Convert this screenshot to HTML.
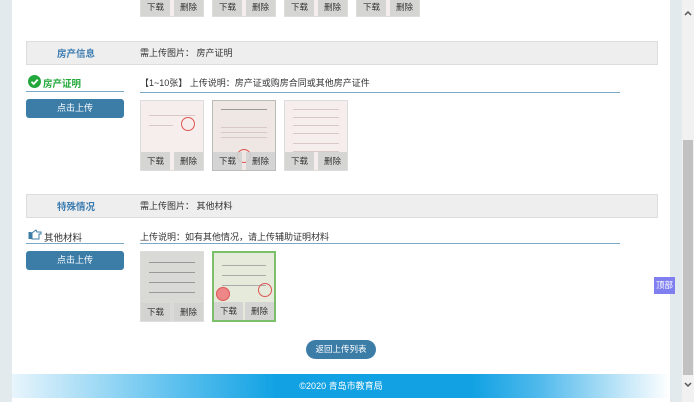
<!DOCTYPE html>
<html><head><meta charset="utf-8">
<style>
*{margin:0;padding:0;box-sizing:border-box}
body{width:694px;height:402px;overflow:hidden;position:relative;background:#fff;font-family:"Liberation Sans","Noto Sans CJK SC",sans-serif;font-size:9px;color:#333}
.abs{position:absolute}
.lstrip{left:0;top:0;width:12px;height:402px;background:#e3eaee}
.rstrip{left:670px;top:0;width:12px;height:402px;background:#e3eaee}
.sb{left:682px;top:0;width:12px;height:402px;background:#f1f1f1}
.thumbsb{left:683px;top:140px;width:10px;height:235px;background:#c1c1c1}
.hdr{left:26px;width:632px;height:24px;background:#eee;border:1px solid #ddd}
.hdr .l{position:absolute;left:0;width:98px;text-align:center;top:4px;color:#3a7bb0;font-weight:bold;font-size:9.5px}
.hdr .r{position:absolute;left:113px;top:4px}
.ul{left:26px;width:98px;height:1px;background:#7aa9c8}
.ur{left:140px;width:480px;height:1px;background:#7aa9c8}
.btn{left:26px;width:98px;height:19px;background:#3c7da8;border-radius:3px;color:#fff;text-align:center;line-height:19px;font-size:9px}
.th{width:64px;height:71px;border:1px solid #ddd;background:#f6eeec;overflow:hidden}
.th .bar{position:absolute;left:0;right:0;bottom:0;height:18px}
.th .bar span{position:absolute;top:0;height:18px;width:29px;background:rgba(210,210,210,.9);text-align:center;line-height:18px;font-size:8.5px;color:#333}
.ln{position:absolute;left:8px;right:8px;height:1px;background:#d9c8c4}
.seal{position:absolute;width:14px;height:14px;border:1px solid #d55;border-radius:50%}
</style></head><body>
<div class="abs lstrip"></div><div class="abs rstrip"></div>
<div class="abs sb"></div><div class="abs thumbsb"></div>
<svg class="abs" style="left:682px;top:8px" width="12" height="10"><path d="M3 7 L6 4 L9 7" stroke="#555" stroke-width="1.5" fill="none"/></svg>
<svg class="abs" style="left:682px;top:380px" width="12" height="10"><path d="M3 3 L6 6 L9 3" stroke="#555" stroke-width="1.5" fill="none"/></svg>

<div class="abs th" style="left:140px;top:-54px"><div class="bar"><span style="left:0">下载</span><span style="right:0">删除</span></div></div>
<div class="abs th" style="left:212px;top:-54px"><div class="bar"><span style="left:0">下载</span><span style="right:0">删除</span></div></div>
<div class="abs th" style="left:284px;top:-54px"><div class="bar"><span style="left:0">下载</span><span style="right:0">删除</span></div></div>
<div class="abs th" style="left:356px;top:-54px"><div class="bar"><span style="left:0">下载</span><span style="right:0">删除</span></div></div>

<div class="abs hdr" style="top:41px"><div class="l">房产信息</div><div class="r">需上传图片： 房产证明</div></div>
<svg class="abs" style="left:28px;top:75px" width="13" height="13"><circle cx="6.5" cy="6.5" r="6.5" fill="#22a83a"/><path d="M3.5 6.8 L5.7 9 L9.7 4.6" stroke="#fff" stroke-width="1.8" fill="none"/></svg>
<div class="abs" style="left:43px;top:76px;color:#22a83a;font-weight:bold;font-size:9.5px">房产证明</div>
<div class="abs ul" style="top:91px"></div>
<div class="abs" style="left:140px;top:76px">【1~10张】 上传说明：房产证或购房合同或其他房产证件</div>
<div class="abs ur" style="top:92px"></div>
<div class="abs btn" style="top:99px">点击上传</div>
<div class="abs th" style="left:140px;top:100px"><div class="ln" style="top:14px"></div><div class="ln" style="top:24px;right:30px"></div><div class="seal" style="left:40px;top:16px"></div><div class="bar"><span style="left:0">下载</span><span style="right:0">删除</span></div></div>
<div class="abs th" style="left:212px;top:100px;background:#efe7e3;border-color:#bbb"><div class="ln" style="top:8px;background:#999"></div><div class="ln" style="top:26px"></div><div class="ln" style="top:31px"></div><div class="ln" style="top:36px"></div><div class="seal" style="left:24px;top:48px"></div><div class="bar"><span style="left:0">下载</span><span style="right:0">删除</span></div></div>
<div class="abs th" style="left:284px;top:100px"><div class="ln" style="top:8px"></div><div class="ln" style="top:16px"></div><div class="ln" style="top:24px"></div><div class="ln" style="top:32px"></div><div class="ln" style="top:42px"></div><div class="ln" style="top:50px"></div><div class="bar"><span style="left:0">下载</span><span style="right:0">删除</span></div></div>

<div class="abs hdr" style="top:194px"><div class="l">特殊情况</div><div class="r">需上传图片： 其他材料</div></div>
<svg class="abs" style="left:28px;top:229px" width="14" height="11"><rect x="0.5" y="3" width="3" height="7" fill="#3c7da8"/><path d="M4 4 L8 1 L9 3 L13 3 L13 5 L11 5 L11 10 L4 10 Z" fill="#fff" stroke="#3c7da8"/></svg>
<div class="abs" style="left:44px;top:230px;font-size:9.5px">其他材料</div>
<div class="abs ul" style="top:243px"></div>
<div class="abs" style="left:140px;top:230px">上传说明：如有其他情况，请上传辅助证明材料</div>
<div class="abs ur" style="top:243px"></div>
<div class="abs btn" style="top:251px">点击上传</div>
<div class="abs th" style="left:140px;top:251px;background:#d9d9d6"><div class="ln" style="top:10px;background:#999"></div><div class="ln" style="top:20px;background:#999"></div><div class="ln" style="top:30px;background:#999"></div><div class="ln" style="top:40px;background:#999"></div><div class="bar"><span style="left:0">下载</span><span style="right:0">删除</span></div></div>
<div class="abs th" style="left:212px;top:251px;background:#e6eadb;border:2px solid #7cbf6a"><div class="ln" style="top:12px;background:#aaa"></div><div class="ln" style="top:22px;background:#aaa"></div><div class="ln" style="top:32px;background:#aaa"></div><div class="seal" style="left:2px;top:34px;background:#e88"></div><div class="seal" style="left:44px;top:30px"></div><div class="bar"><span style="left:0">下载</span><span style="right:0">删除</span></div></div>

<div class="abs" style="left:306px;top:340px;width:70px;height:19px;border-radius:10px;background:#3c7da8;color:#fff;text-align:center;line-height:19px;font-size:8.5px">返回上传列表</div>
<div class="abs" style="left:654px;top:277px;width:21px;height:17px;background:#7f7ff0;color:#fff;text-align:center;line-height:17px;font-size:8.5px">顶部</div>

<div class="abs" style="left:12px;top:374px;width:658px;height:24px;background:linear-gradient(90deg,#e8f5fc 0%,#5cc0ee 25%,#12a2e3 40%,#12a2e3 70%,#4fb9ec 80%,#d5eefa 95%,#fff 100%);color:#fff;text-align:center;line-height:24px;font-size:9px">©2020 青岛市教育局</div>
</body></html>
